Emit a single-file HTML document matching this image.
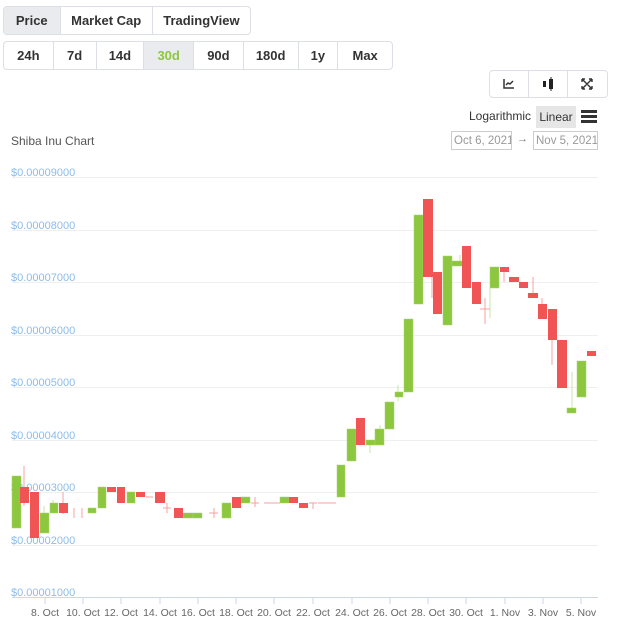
<!DOCTYPE html>
<html><head><meta charset="utf-8"><style>
body{margin:0;width:624px;height:625px;background:#fff;font-family:"Liberation Sans",sans-serif;position:relative;overflow:hidden}
.g{position:absolute;display:flex;border:1px solid #dcdfe3;border-radius:4px;overflow:hidden;box-sizing:border-box}
.g div{display:flex;align-items:center;justify-content:center;font-size:13px;font-weight:bold;color:#333;border-right:1px solid #dcdfe3;box-sizing:border-box}
.g div:last-child{border-right:none}
.sel{background:#e9ebee}
.t{position:absolute;font-size:12px;color:#555;white-space:nowrap}
.d{position:absolute;border:1px solid #ccc;color:#999;font-size:11.5px;height:19px;line-height:18px;box-sizing:border-box;padding:0 2px;white-space:nowrap;overflow:hidden}
</style></head><body>
<div class="g" style="left:3px;top:6px;width:248px;height:29px">
<div class="sel" style="width:57px">Price</div><div style="width:93px">Market Cap</div><div style="width:98px">TradingView</div></div>
<div class="g" style="left:3px;top:41px;width:390px;height:29px">
<div style="width:50px">24h</div><div style="width:43px">7d</div><div style="width:48px">14d</div><div class="sel" style="width:50px;color:#8dc63f">30d</div><div style="width:50px">90d</div><div style="width:55px">180d</div><div style="width:40px">1y</div><div style="width:54px">Max</div></div>
<div class="g" style="left:489px;top:70px;width:119px;height:28px">
<div style="width:40px"><svg width="12" height="10" viewBox="0 0 12 10"><path d="M1 0V9H11" stroke="#333" stroke-width="1.5" fill="none"/><path d="M3 6L5 4L7 5L10 2" stroke="#333" stroke-width="1.5" fill="none"/></svg></div>
<div style="width:39px"><svg width="12" height="14" viewBox="0 0 12 14"><rect x="1" y="4" width="3" height="6" fill="#222"/><rect x="7" y="2" width="4" height="10" fill="#222"/><path d="M9 0V14" stroke="#222"/></svg></div>
<div style="width:40px"><svg width="12" height="12" viewBox="0 0 12 12"><path d="M1 1L11 11M11 1L1 11M1 1h3M1 1v3M11 1h-3M11 1v3M1 11h3M1 11v-3M11 11h-3M11 11v-3" stroke="#333" stroke-width="1.4" fill="none"/></svg></div></div>
<div class="t" style="left:469px;top:109px;color:#333">Logarithmic</div>
<div style="position:absolute;left:536px;top:106px;width:40px;height:22px;background:#e6e6e6;font-size:12px;color:#333;line-height:22px;text-align:center">Linear</div>
<div style="position:absolute;left:581px;top:110px;width:16px;height:3px;background:#333;box-shadow:0 5px 0 #333,0 10px 0 #333"></div>
<div class="t" style="left:11px;top:134px">Shiba Inu Chart</div>
<div class="d" style="left:451px;top:131px;width:61px">Oct 6, 2021</div>
<div style="position:absolute;left:517px;top:133px;font-size:11px;color:#777">→</div>
<div class="d" style="left:533px;top:131px;width:65px">Nov 5, 2021</div>
<svg style="position:absolute;left:0;top:0" width="624" height="625">
<g stroke="#efefef" stroke-width="1">
<path d="M12 177.5H598M12 230.5H598M12 282.5H598M12 335.5H598M12 387.5H598M12 440.5H598M12 492.5H598M12 545.5H598"/></g>
<path d="M12 597.5H598" stroke="#ccd6eb"/>
<g stroke="#ccd6eb"><path d="M45 598v6M83 598v6M121 598v6M160 598v6M198 598v6M236 598v6M274 598v6M313 598v6M352 598v6M390 598v6M428 598v6M466 598v6M505 598v6M543 598v6M581 598v6"/></g>
<g font-size="11" fill="#8cbcea" font-family="Liberation Sans, sans-serif">
<text x="11" y="176">$0.00009000</text><text x="11" y="229">$0.00008000</text><text x="11" y="281">$0.00007000</text><text x="11" y="334">$0.00006000</text><text x="11" y="386">$0.00005000</text><text x="11" y="439">$0.00004000</text><text x="11" y="491">$0.00003000</text><text x="11" y="544">$0.00002000</text><text x="11" y="596">$0.00001000</text></g>
<g font-size="10.5" fill="#666" text-anchor="middle" font-family="Liberation Sans, sans-serif">
<text x="45" y="616">8. Oct</text><text x="83" y="616">10. Oct</text><text x="121" y="616">12. Oct</text><text x="160" y="616">14. Oct</text><text x="198" y="616">16. Oct</text><text x="236" y="616">18. Oct</text><text x="274" y="616">20. Oct</text><text x="313" y="616">22. Oct</text><text x="352" y="616">24. Oct</text><text x="390" y="616">26. Oct</text><text x="428" y="616">28. Oct</text><text x="466" y="616">30. Oct</text><text x="505" y="616">1. Nov</text><text x="543" y="616">3. Nov</text><text x="581" y="616">5. Nov</text></g>
<g stroke="#f4a0a0"><path d="M24 466v40M63 492v22M432 277v21M449 314v10M485 298v26M74 508v10M82 508v10M146 497h7M167 503v10M163 508h8M214 508v10M209 513h9M255 497v10M251 503h8M264 503h8M272 503h8M313 503v6M309 503h8M318 503h18M504 272v10M552 340v25M480 309h10M533 277v18M542 298v8"/></g>
<g stroke="#c9e3a8"><path d="M44 506v10M53 500v6M370 445v8M380 425v10M398 385v16M490 288v30M572 372v36M460 255v8"/></g>
<g fill="#8dc63f" stroke="#a8d66b" stroke-width="0.5">
<rect x="12" y="476" width="9" height="52"/><rect x="40" y="513" width="9" height="20"/><rect x="50" y="503" width="8" height="10"/><rect x="88" y="508" width="8" height="5"/><rect x="98" y="487" width="8" height="21"/><rect x="127" y="492" width="8" height="11"/><rect x="183" y="513" width="10" height="5"/><rect x="193" y="513" width="9" height="5"/><rect x="222" y="503" width="9" height="15"/><rect x="241" y="497" width="9" height="6"/><rect x="280" y="497" width="9" height="6"/><rect x="337" y="465" width="8" height="32"/><rect x="347" y="429" width="9" height="32"/><rect x="366" y="440" width="9" height="5"/><rect x="375" y="429" width="9" height="16"/><rect x="385" y="402" width="9" height="27"/><rect x="395" y="392" width="8" height="5"/><rect x="404" y="319" width="9" height="73"/><rect x="414" y="215" width="9" height="89"/><rect x="443" y="256" width="9" height="69"/><rect x="452" y="261" width="10" height="5"/><rect x="490" y="267" width="9" height="21"/><rect x="567" y="408" width="9" height="5"/><rect x="577" y="361" width="9" height="36"/></g>
<g fill="#f05454">
<rect x="20" y="487" width="9" height="16"/><rect x="30" y="492" width="9" height="46"/><rect x="59" y="503" width="9" height="10"/><rect x="107" y="487" width="9" height="5"/><rect x="117" y="487" width="8" height="16"/><rect x="136" y="492" width="9" height="5"/><rect x="155" y="492" width="10" height="11"/><rect x="174" y="508" width="9" height="10"/><rect x="232" y="497" width="9" height="11"/><rect x="289" y="497" width="9" height="6"/><rect x="299" y="503" width="9" height="5"/><rect x="356" y="418" width="9" height="27"/><rect x="423" y="199" width="10" height="78"/><rect x="433" y="272" width="9" height="42"/><rect x="462" y="246" width="9" height="42"/><rect x="472" y="282" width="9" height="22"/><rect x="500" y="267" width="9" height="5"/><rect x="509" y="277" width="10" height="5"/><rect x="519" y="282" width="9" height="6"/><rect x="528" y="293" width="10" height="5"/><rect x="538" y="304" width="9" height="15"/><rect x="548" y="309" width="9" height="31"/><rect x="557" y="340" width="10" height="48"/><rect x="587" y="351" width="9" height="5"/></g>
</svg>
</body></html>
